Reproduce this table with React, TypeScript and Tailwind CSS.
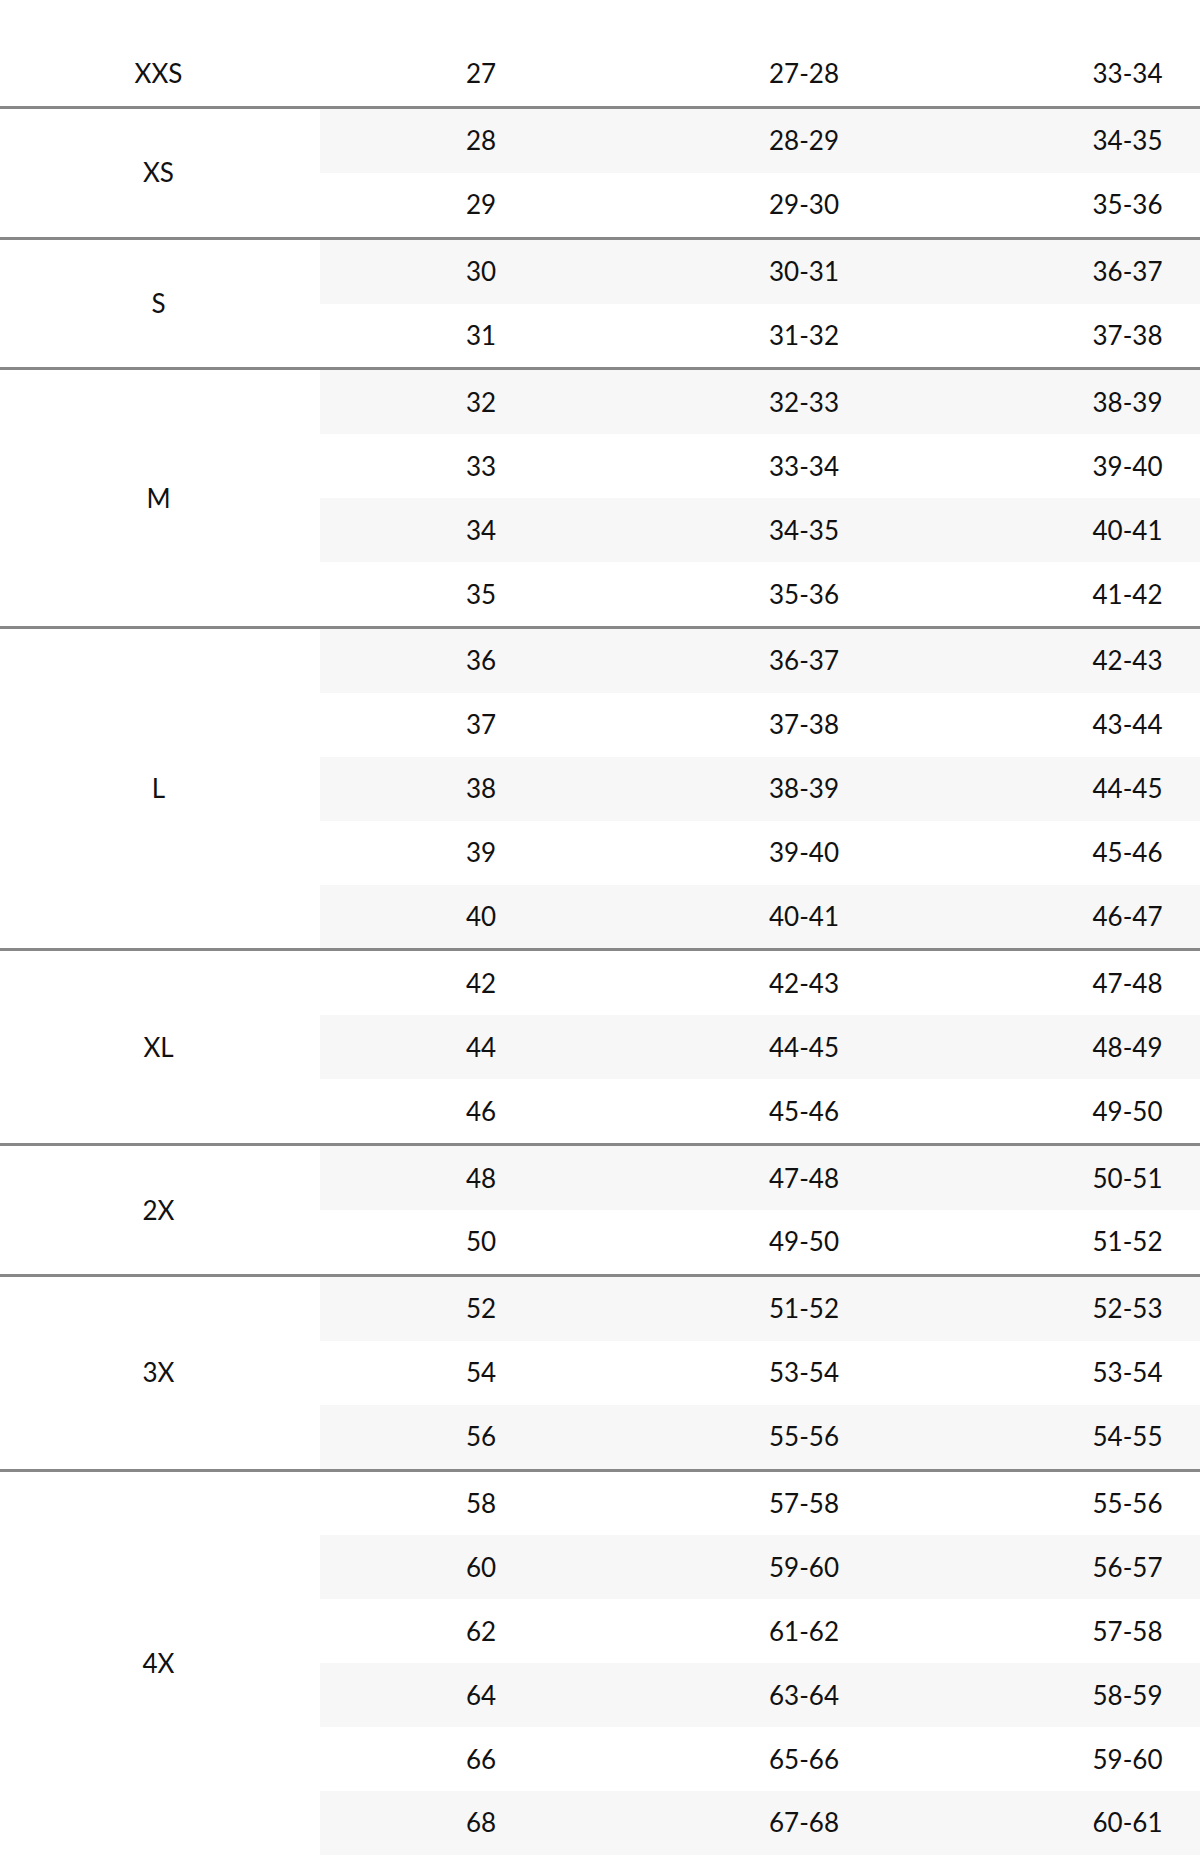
const groups: { size: string; rows: [string, string, string][] }[] = [
  { size: 'XXS', rows: [['27', '27-28', '33-34']] },
  { size: 'XS', rows: [['28', '28-29', '34-35'], ['29', '29-30', '35-36']] },
  { size: 'S', rows: [['30', '30-31', '36-37'], ['31', '31-32', '37-38']] },
  {
    size: 'M',
    rows: [
      ['32', '32-33', '38-39'],
      ['33', '33-34', '39-40'],
      ['34', '34-35', '40-41'],
      ['35', '35-36', '41-42'],
    ],
  },
  {
    size: 'L',
    rows: [
      ['36', '36-37', '42-43'],
      ['37', '37-38', '43-44'],
      ['38', '38-39', '44-45'],
      ['39', '39-40', '45-46'],
      ['40', '40-41', '46-47'],
    ],
  },
  {
    size: 'XL',
    rows: [
      ['42', '42-43', '47-48'],
      ['44', '44-45', '48-49'],
      ['46', '45-46', '49-50'],
    ],
  },
  { size: '2X', rows: [['48', '47-48', '50-51'], ['50', '49-50', '51-52']] },
  {
    size: '3X',
    rows: [
      ['52', '51-52', '52-53'],
      ['54', '53-54', '53-54'],
      ['56', '55-56', '54-55'],
    ],
  },
  {
    size: '4X',
    rows: [
      ['58', '57-58', '55-56'],
      ['60', '59-60', '56-57'],
      ['62', '61-62', '57-58'],
      ['64', '63-64', '58-59'],
      ['66', '65-66', '59-60'],
      ['68', '67-68', '60-61'],
    ],
  },
]

export default function App() {
  let n = 0
  return (
    <div className="h-[1857px] w-[1200px] overflow-hidden bg-white pt-[42px] font-['Lato',sans-serif] text-[26px] text-[#111]">
      <div className="w-[1290px]">
        {groups.map((g, gi) => (
          <div key={g.size} className={gi > 0 ? 'flex border-t-[3px] border-[#888]' : 'flex'}>
            <div className="flex w-[320px] shrink-0 items-center justify-center pr-[3px]">{g.size}</div>
            <div className="flex flex-col">
              {g.rows.map((r) => {
                n++
                return (
                  <div
                    key={r[0]}
                    className={
                      n % 2 === 0
                        ? 'grid h-[63.9px] grid-cols-[322px_324px_323px] items-center bg-[#f7f7f7] text-center'
                        : 'grid h-[63.9px] grid-cols-[322px_324px_323px] items-center text-center'
                    }
                  >
                    <span>{r[0]}</span>
                    <span>{r[1]}</span>
                    <span>{r[2]}</span>
                  </div>
                )
              })}
            </div>
          </div>
        ))}
      </div>
    </div>
  )
}
